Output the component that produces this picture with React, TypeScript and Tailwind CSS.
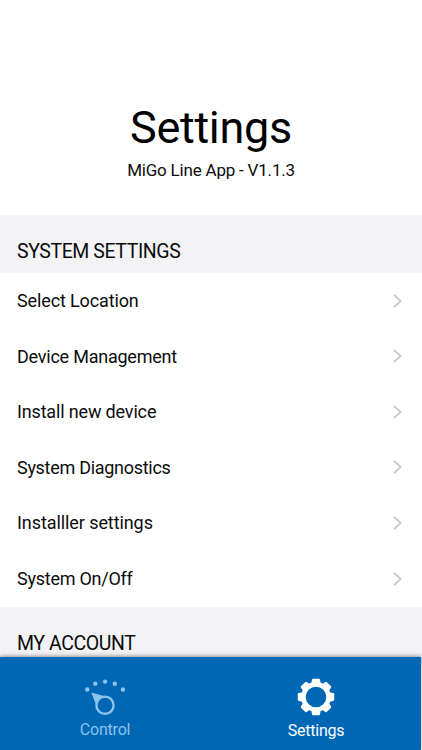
import React from 'react';

const systemSettings = [
  { label: 'Select Location', tracking: 'tracking-[-0.13px]' },
  { label: 'Device Management', tracking: 'tracking-[-0.23px]' },
  { label: 'Install new device', tracking: 'tracking-[-0.16px]' },
  { label: 'System Diagnostics', tracking: 'tracking-[-0.29px]' },
  { label: 'Installler settings', tracking: 'tracking-[-0.08px]' },
  { label: 'System On/Off', tracking: 'tracking-[-0.25px]' },
];

const gearTeeth = [0, 45, 90, 135, 180, 225, 270, 315];

const Chevron = () => (
  <svg className="h-[14px] w-[9px]" viewBox="0 0 9 14" fill="none" stroke="#c6c6ca" strokeWidth="1.7">
    <path d="M1 0.8l6.6 6.2L1 13.2" />
  </svg>
);

const ControlIcon = () => (
  <svg className="h-[38px] w-[42px]" viewBox="0 0 42 38" fill="#8dc4ec">
    <circle cx="3.3" cy="11.5" r="2.2" />
    <circle cx="11.3" cy="5.7" r="2.2" />
    <circle cx="21" cy="3.6" r="2.2" />
    <circle cx="30.8" cy="5.7" r="2.2" />
    <circle cx="38.9" cy="11.5" r="2.2" />
    <path d="M7.2 14.4L20 18L12 26.6Z" />
    <circle cx="21" cy="27.2" r="8.6" fill="#0067b4" stroke="#8dc4ec" strokeWidth="2.4" />
  </svg>
);

const GearIcon = () => (
  <svg className="h-[38px] w-[38px]" viewBox="-19 -19 38 38">
    <g fill="#fff">
      {gearTeeth.map((angle) => (
        <path
          key={angle}
          d="M-4.8 -13L-4 -17.2Q-3.8 -18.2 -2.8 -18.2H2.8Q3.8 -18.2 4 -17.2L4.8 -13Z"
          transform={`rotate(${angle})`}
        />
      ))}
    </g>
    <circle r="12.6" fill="none" stroke="#fff" strokeWidth="4.6" />
  </svg>
);

const SectionHeader = ({ children }: { children: React.ReactNode }) => (
  <h2 className="flex h-[58px] items-end bg-[#f3f3f6] pl-[17px] pb-[7px] text-[19.5px] leading-[28px] tracking-[-0.42px]">
    {children}
  </h2>
);

const App = () => {
  return (
    <div className="relative h-[750px] w-[422px] overflow-hidden bg-white font-['Roboto',sans-serif] text-[#0c0c0c]">
      <header className="flex h-[215px] flex-col items-center pt-[101px]">
        <h1 className="text-[45px] leading-[54px] tracking-[-0.3px] text-black">Settings</h1>
        <p className="mt-[4px] text-[17px] leading-[22px] tracking-[-0.2px]">MiGo Line App - V1.1.3</p>
      </header>

      <SectionHeader>SYSTEM SETTINGS</SectionHeader>
      <ul>
        {systemSettings.map(({ label, tracking }) => (
          <li key={label} className="flex h-[55.6px] items-center justify-between pr-[20px] pb-[0.5px] pl-[17px] text-[18px]">
            <span className={tracking}>{label}</span>
            <Chevron />
          </li>
        ))}
      </ul>
      <SectionHeader>MY ACCOUNT</SectionHeader>

      <nav className="absolute bottom-0 left-0 flex h-[93px] w-[421px] bg-[#0067b4] shadow-[0_-1px_4px_rgba(0,0,0,0.4)]">
        <a className="flex flex-1 flex-col items-center pt-[21px] text-[#8dc4ec]">
          <ControlIcon />
          <span className="mt-[4px] text-[16px] leading-[20px] tracking-[-0.2px]">Control</span>
        </a>
        <a className="flex flex-1 flex-col items-center pt-[21px] pl-px text-white">
          <GearIcon />
          <span className="mt-[5px] text-[16px] leading-[20px] tracking-[-0.25px]">Settings</span>
        </a>
      </nav>
    </div>
  );
};

export default App;
